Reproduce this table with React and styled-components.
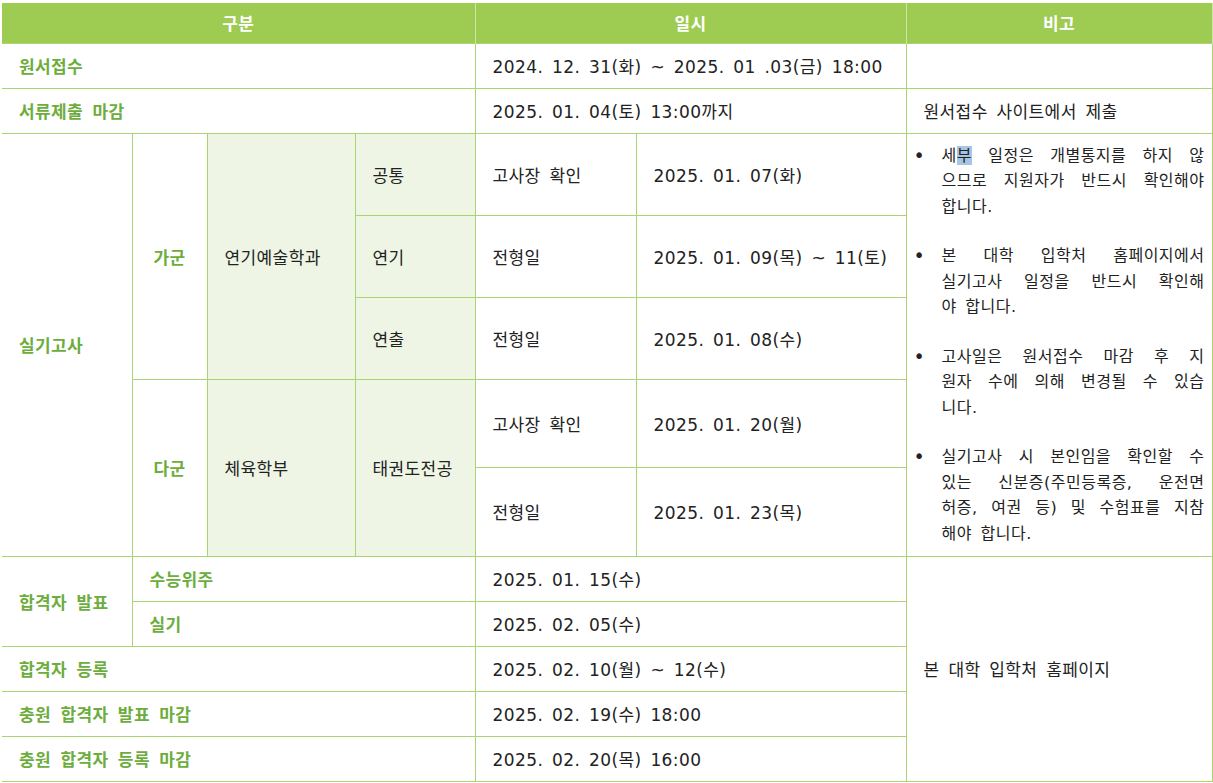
import React from "react";
import styled, { createGlobalStyle } from "styled-components";

// 기본 스타일
const GlobalStyle = createGlobalStyle`
  body {
    margin: 0;
    padding: 3px 0 0 2px;
    background: #fff;
    font-family: "DejaVu Sans", "Noto Sans CJK KR", sans-serif;
  }
`;

const LINE = "#aad471";

const Table = styled.table`
  width: 1210px;
  border-collapse: collapse;
  table-layout: fixed;
  border-left: hidden;
  border-top: hidden;
  font-size: 17px;
  letter-spacing: 0.4px;
  word-spacing: 3px;
  color: #222;
`;

const HeadRow = styled.tr`
  height: 40px;
  background: #9ecb51;
`;

const HeadCell = styled.th`
  color: #fff;
  font-weight: 700;
  font-size: 17px;
  text-align: center;
  border-right: 1px solid #cbe6a6;
`;

const Row = styled.tr`
  height: ${(p) => p.$h}px;
`;

const Cell = styled.td`
  border: 1px solid ${LINE};
  padding: 0 10px 0 17px;
  vertical-align: middle;
  white-space: nowrap;
  text-align: ${(p) => (p.$center ? "center" : "left")};
  background: ${(p) => (p.$shade ? "#eef5e5" : "#fff")};
  color: ${(p) => (p.$label ? "#6cad3d" : "#222")};
  font-weight: ${(p) => (p.$label ? 700 : 400)};
  ${(p) => p.$center && "padding: 0;"}
`;

// 비고 칸
const NoteCell = styled.td`
  border: 1px solid ${LINE};
  padding: 0 7px 0 6px;
  vertical-align: middle;
  font-size: 16px;
  line-height: 25.5px;
  letter-spacing: 0.5px;
`;

const NoteList = styled.ul`
  list-style: none;
  margin: 0;
  padding: 0;
  display: flex;
  flex-direction: column;
  gap: 24px;
`;

const NoteItem = styled.li`
  display: flex;
`;

const Bullet = styled.span`
  flex: 0 0 28px;
  font-size: 19px;
  line-height: 25.5px;
  padding-left: 1px;
`;

const NoteText = styled.div`
  flex: 1;
`;

// 마지막 줄은 왼쪽 정렬, 나머지는 양쪽 정렬
const Line = styled.span`
  display: block;
  white-space: nowrap;
  text-align: justify;
  text-justify: inter-word;
  text-align-last: ${(p) => (p.$last ? "left" : "justify")};
  word-spacing: ${(p) => (p.$last ? "3px" : "-3px")};
`;

const Selected = styled.span`
  background: #a6c5e4;
`;

const notes = [
  [
    <>
      세<Selected>부</Selected> 일정은 개별통지를 하지 않
    </>,
    "으므로 지원자가 반드시 확인해야",
    "합니다.",
  ],
  ["본 대학 입학처 홈페이지에서", "실기고사 일정을 반드시 확인해", "야 합니다."],
  ["고사일은 원서접수 마감 후 지", "원자 수에 의해 변경될 수 있습", "니다."],
  [
    "실기고사 시 본인임을 확인할 수",
    "있는 신분증(주민등록증, 운전면",
    "허증, 여권 등) 및 수험표를 지참",
    "해야 합니다.",
  ],
];

const Notes = () => (
  <NoteList>
    {notes.map((lines, i) => (
      <NoteItem key={i}>
        <Bullet>•</Bullet>
        <NoteText>
          {lines.map((line, j) => (
            <Line key={j} $last={j === lines.length - 1}>
              {line}
            </Line>
          ))}
        </NoteText>
      </NoteItem>
    ))}
  </NoteList>
);

const App = () => {
  return (
    <>
      <GlobalStyle />
      <Table>
        <colgroup>
          <col style={{ width: 130 }} />
          <col style={{ width: 75 }} />
          <col style={{ width: 148 }} />
          <col style={{ width: 120 }} />
          <col style={{ width: 161 }} />
          <col style={{ width: 270 }} />
          <col style={{ width: 306 }} />
        </colgroup>
        <thead>
          <HeadRow>
            <HeadCell colSpan={4}>구분</HeadCell>
            <HeadCell colSpan={2}>일시</HeadCell>
            <HeadCell>비고</HeadCell>
          </HeadRow>
        </thead>
        <tbody>
          <Row $h={45}>
            <Cell $label colSpan={4}>원서접수</Cell>
            <Cell colSpan={2}>2024. 12. 31(화) ~ 2025. 01 .03(금) 18:00</Cell>
            <Cell />
          </Row>
          <Row $h={45}>
            <Cell $label colSpan={4}>서류제출 마감</Cell>
            <Cell colSpan={2}>2025. 01. 04(토) 13:00까지</Cell>
            <Cell>원서접수 사이트에서 제출</Cell>
          </Row>
          <Row $h={82}>
            <Cell $label rowSpan={5}>실기고사</Cell>
            <Cell $label $center rowSpan={3}>가군</Cell>
            <Cell $shade rowSpan={3}>연기예술학과</Cell>
            <Cell $shade>공통</Cell>
            <Cell>고사장 확인</Cell>
            <Cell>2025. 01. 07(화)</Cell>
            <NoteCell rowSpan={5}>
              <Notes />
            </NoteCell>
          </Row>
          <Row $h={82}>
            <Cell $shade>연기</Cell>
            <Cell>전형일</Cell>
            <Cell>2025. 01. 09(목) ~ 11(토)</Cell>
          </Row>
          <Row $h={82}>
            <Cell $shade>연출</Cell>
            <Cell>전형일</Cell>
            <Cell>2025. 01. 08(수)</Cell>
          </Row>
          <Row $h={88}>
            <Cell $label $center rowSpan={2}>다군</Cell>
            <Cell $shade rowSpan={2}>체육학부</Cell>
            <Cell $shade rowSpan={2}>태권도전공</Cell>
            <Cell>고사장 확인</Cell>
            <Cell>2025. 01. 20(월)</Cell>
          </Row>
          <Row $h={89}>
            <Cell>전형일</Cell>
            <Cell>2025. 01. 23(목)</Cell>
          </Row>
          <Row $h={45}>
            <Cell $label rowSpan={2}>합격자 발표</Cell>
            <Cell $label colSpan={3}>수능위주</Cell>
            <Cell colSpan={2}>2025. 01. 15(수)</Cell>
            <Cell rowSpan={5}>본 대학 입학처 홈페이지</Cell>
          </Row>
          <Row $h={45}>
            <Cell $label colSpan={3}>실기</Cell>
            <Cell colSpan={2}>2025. 02. 05(수)</Cell>
          </Row>
          <Row $h={45}>
            <Cell $label colSpan={4}>합격자 등록</Cell>
            <Cell colSpan={2}>2025. 02. 10(월) ~ 12(수)</Cell>
          </Row>
          <Row $h={45}>
            <Cell $label colSpan={4}>충원 합격자 발표 마감</Cell>
            <Cell colSpan={2}>2025. 02. 19(수) 18:00</Cell>
          </Row>
          <Row $h={45}>
            <Cell $label colSpan={4}>충원 합격자 등록 마감</Cell>
            <Cell colSpan={2}>2025. 02. 20(목) 16:00</Cell>
          </Row>
        </tbody>
      </Table>
    </>
  );
};

export default App;
